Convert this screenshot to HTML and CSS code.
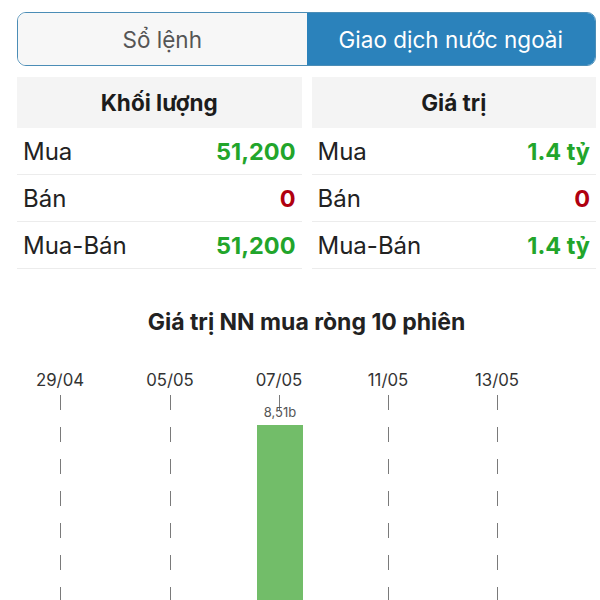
FILE: index.html
```html
<!DOCTYPE html>
<html lang="vi">
<head>
  <meta charset="UTF-8" />
  <meta name="viewport" content="width=device-width, initial-scale=1.0"/>
  <title>Giao dịch nước ngoài</title>
  <link rel="stylesheet" href="styles.css">
</head>
<body>
  <div class="khung">
    <div class="tabs">
      <div class="tab">Sổ lệnh</div>
      <div class="tab active">Giao dịch nước ngoài</div>
    </div>

    <div class="bang-doi">
      <table class="bang">
        <thead>
          <tr><th colspan="2">Khối lượng</th></tr>
        </thead>
        <tbody>
          <tr><td>Mua</td><td class="so tang">51,200</td></tr>
          <tr><td>Bán</td><td class="so giam">0</td></tr>
          <tr><td>Mua-Bán</td><td class="so tang">51,200</td></tr>
        </tbody>
      </table>
      <table class="bang">
        <thead>
          <tr><th colspan="2">Giá trị</th></tr>
        </thead>
        <tbody>
          <tr><td>Mua</td><td class="so tang">1.4 tỷ</td></tr>
          <tr><td>Bán</td><td class="so giam">0</td></tr>
          <tr><td>Mua-Bán</td><td class="so tang">1.4 tỷ</td></tr>
        </tbody>
      </table>
    </div>

    <h2 class="tieu-de">Giá trị NN mua ròng 10 phiên</h2>
  </div>

  <svg class="bieu-do" width="600" height="240" viewBox="0 0 600 240">
    <g class="truc">
      <line x1="60.5" y1="35" x2="60.5" y2="240"/>
      <line x1="170.5" y1="35" x2="170.5" y2="240"/>
      <line x1="279.5" y1="35" x2="279.5" y2="240"/>
      <line x1="388.5" y1="35" x2="388.5" y2="240"/>
      <line x1="497.5" y1="35" x2="497.5" y2="240"/>
    </g>
    <g class="ngay">
      <text x="60" y="26">29/04</text>
      <text x="170" y="26">05/05</text>
      <text x="279" y="26">07/05</text>
      <text x="388" y="26">11/05</text>
      <text x="497" y="26">13/05</text>
    </g>
    <rect class="cot" x="257" y="65" width="46" height="175"/>
    <text class="nhan" x="280" y="57">8,51b</text>
  </svg>
</body>
</html>
```

FILE: styles.css
```css
body {
  margin: 0;
  background: #fff;
  font-family: Inter, "Noto Sans", sans-serif;
  color: #222;
}
.khung {
  padding: 12px 4px 0 17px;
}
.tabs {
  display: flex;
  height: 54px;
  border: 1.5px solid #4b8db6;
  border-radius: 9px;
  overflow: hidden;
  box-sizing: border-box;
}
.tab {
  flex: 1;
  display: flex;
  align-items: center;
  justify-content: center;
  background: #f7f7f7;
  color: #555;
  font-size: 22.5px;
}
.tab.active {
  background: #2b82bb;
  color: #fff;
}
.bang-doi {
  display: flex;
  gap: 10px;
  margin-top: 11px;
}
.bang {
  flex: 1;
  border-collapse: collapse;
}
.bang th {
  background: #f4f4f4;
  height: 51px;
  font-size: 22.5px;
  font-weight: 700;
  color: #1c1c1c;
  padding: 0;
}
.bang td {
  height: 45px;
  padding: 1px 6px 0;
  font-size: 24px;
  border-bottom: 1px solid #ececec;
  color: #222;
}
.bang td.so {
  text-align: right;
  font-weight: 700;
  font-size: 23.5px;
}
.bang td.tang {
  color: #22a52b;
}
.bang td.giam {
  color: #b0000f;
}
.tieu-de {
  margin: 39px 0 0;
  text-align: center;
  font-size: 23px;
  line-height: 28px;
  font-weight: 700;
  color: #222;
}
.bieu-do {
  display: block;
  margin-top: 24px;
}
.truc line {
  stroke: #7a7a7a;
  stroke-width: 1;
  stroke-dasharray: 15 17;
}
.ngay text {
  font-size: 16.8px;
  fill: #333;
  text-anchor: middle;
}
.cot {
  fill: #72bd69;
}
.nhan {
  font-size: 13px;
  fill: #555;
  text-anchor: middle;
}
```
